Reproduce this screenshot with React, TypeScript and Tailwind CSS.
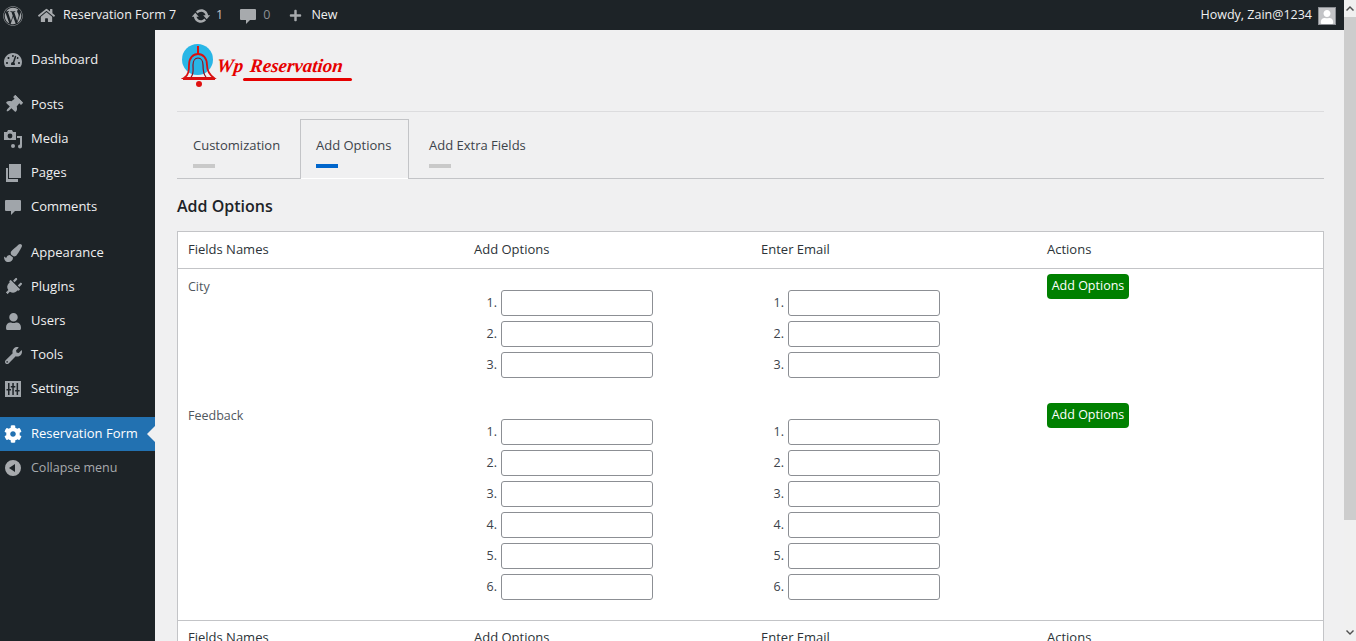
import { FaWordpress, FaHome, FaPlus, FaTachometerAlt, FaThumbtack, FaPlug, FaUser, FaWrench, FaCog, FaPaintBrush } from "react-icons/fa";
import type { ReactNode } from "react";

const font = "font-['Open_Sans','Noto_Sans',sans-serif]";

function UpdateIcon({ className }: { className?: string }) {
  return (
    <svg viewBox="0 0 20 20" className={className} fill="currentColor">
      <path d="M10.200 3.280c3.530 0 6.430 2.610 6.920 6h2.080l-3.500 4-3.500-4h2.320c-.450-1.970-2.210-3.450-4.320-3.450-1.450 0-2.730.710-3.540 1.780L4.950 5.660C6.230 4.200 8.110 3.280 10.200 3.280zm-.400 13.440c-3.520 0-6.430-2.610-6.920-6H.800l3.500-4c1.170 1.330 2.330 2.670 3.500 4H5.480c.450 1.970 2.210 3.440 4.320 3.440 1.450 0 2.730-.700 3.540-1.770l1.710 1.950c-1.280 1.460-3.150 2.380-5.250 2.380z" />
    </svg>
  );
}

function CommentIcon({ className }: { className?: string }) {
  return (
    <svg viewBox="0 0 20 20" className={className} fill="currentColor">
      <path d="M3 3h14a1 1 0 0 1 1 1v9a1 1 0 0 1-1 1h-5l-4 4v-4H3a1 1 0 0 1-1-1V4a1 1 0 0 1 1-1z" />
    </svg>
  );
}

function MediaIcon() {
  return (
    <svg viewBox="0 0 20 20" className="w-5 h-5" fill="currentColor">
      <path d="M1 3h3l1-2h4l1 2h3v8H1z" />
      <circle cx="7" cy="7" r="2.400" fill="#1d2327" />
      <path d="M14 7h5v10.500a2 2 0 1 1-2-2V9h-3zM12 17a2 2 0 1 1-2-2 2 2 0 0 1 2 2z" />
    </svg>
  );
}

function PagesIcon() {
  return (
    <svg viewBox="0 0 20 20" className="w-5 h-5" fill="currentColor">
      <path d="M6 1h12v14H6z" />
      <path d="M3 5h2v11h10v3H3z" />
    </svg>
  );
}

function SettingsIcon() {
  return (
    <svg viewBox="0 0 20 20" className="w-5 h-5">
      <path fill="currentColor" d="M2 2h16v16H2z" />
      <path fill="#1d2327" d="M5 4h1.500v12H5zM3.500 10h4.500v1.500H3.500zM9.300 4h1.500v12H9.300zM7.800 7h4.500v1.500H7.800zM13.600 4h1.500v12h-1.500zM12.100 11h4.500v1.500h-4.500z" />
    </svg>
  );
}

function CollapseIcon() {
  return (
    <svg viewBox="0 0 20 20" className="w-5 h-5" fill="currentColor">
      <path d="M10 2a8 8 0 1 1 0 16 8 8 0 0 1 0-16zm2 4-6 4 6 4z" fillRule="evenodd" />
    </svg>
  );
}

const menuGroups: { label: string; icon: ReactNode; cls: string }[] = [
  { label: "Dashboard", icon: <FaTachometerAlt className="w-[18px] h-[18px]" />, cls: "mt-[13px] mb-[11px]" },
  { label: "Posts", icon: <FaThumbtack className="w-[18px] h-[18px] rotate-45" />, cls: "mt-[11px]" },
  { label: "Media", icon: <MediaIcon />, cls: "" },
  { label: "Pages", icon: <PagesIcon />, cls: "" },
  { label: "Comments", icon: <CommentIcon className="w-5 h-5" />, cls: "" },
  { label: "Appearance", icon: <FaPaintBrush className="w-[18px] h-[18px]" />, cls: "mt-3" },
  { label: "Plugins", icon: <FaPlug className="w-[18px] h-[18px] rotate-45" />, cls: "" },
  { label: "Users", icon: <FaUser className="w-[17px] h-[17px]" />, cls: "" },
  { label: "Tools", icon: <FaWrench className="w-[17px] h-[17px]" />, cls: "" },
  { label: "Settings", icon: <SettingsIcon />, cls: "" },
];

function Sidebar() {
  return (
    <aside className="w-[155px] shrink-0 bg-[#1d2327] text-[13px] text-[#f0f0f1]">
      {menuGroups.map((m) => (
        <div key={m.label} className={`h-[34px] flex items-center ${m.cls}`}>
          <span className="w-[31px] pl-[3px] pr-[8px] flex justify-center text-[#a0a5aa] shrink-0">{m.icon}</span>
          <span>{m.label}</span>
        </div>
      ))}
      <div className="relative h-[34px] mt-[11px] flex items-center bg-[#2271b1] text-white">
        <span className="w-[31px] pl-[3px] pr-[8px] flex justify-center shrink-0">
          <FaCog className="w-[18px] h-[18px]" />
        </span>
        <span>Reservation Form</span>
        <span className="absolute right-0 top-[9px] border-y-[8px] border-r-[8px] border-y-transparent border-r-[#f0f0f1]" />
      </div>
      <div className="h-[34px] flex items-center text-[12.5px] text-[#a7aaad]">
        <span className="w-[31px] pl-[3px] pr-[8px] flex justify-center shrink-0"><CollapseIcon /></span>
        <span>Collapse menu</span>
      </div>
    </aside>
  );
}

function TopBar() {
  return (
    <header className="h-[30px] shrink-0 bg-[#1d2327] text-[12.5px] text-[#f0f0f1] flex items-center pt-px">
      <FaWordpress className="ml-[3px] w-5 h-5 text-[#a7aaad]" />
      <FaHome className="ml-[15px] w-[17px] h-[17px] text-[#a7aaad]" />
      <span className="ml-[8px]">Reservation Form 7</span>
      <UpdateIcon className="ml-[15px] w-5 h-5 text-[#a7aaad]" />
      <span className="ml-[5px] text-[#c3c4c7]">1</span>
      <CommentIcon className="ml-[15px] w-5 h-5 text-[#a7aaad]" />
      <span className="ml-[5px] text-[#8c8f94]">0</span>
      <FaPlus className="ml-[19px] w-[13px] h-[13px] text-[#a7aaad]" />
      <span className="ml-[9px]">New</span>
      <span className="ml-auto">Howdy, Zain@1234</span>
      <span className="ml-[6px] mr-[8px] w-[18px] h-[18px] bg-[#c3c4c7] border border-[#8c8f94] flex items-end justify-center overflow-hidden">
        <FaUser className="w-[14px] h-[14px] text-white" />
      </span>
    </header>
  );
}

function Logo() {
  return (
    <div className="flex items-start h-[50px] pl-[4px] pt-[3px]">
      <svg viewBox="0 0 36 44" className="w-[36px] h-[44px] shrink-0">
        <circle cx="16.500" cy="15.500" r="15.500" fill="#29b6e6" />
        <path d="M17 2v8" stroke="#e01010" strokeWidth="2" />
        <path d="M3 34c5-3 5-8 5-13 0-7 4-11 9-11s9 4 9 11c0 5 3 10 7 13z" fill="none" stroke="#d81010" strokeWidth="1.800" />
        <path d="M10 33c3-3 2-7 2-12 0-4 2-7 5-7s5 3 5 7c0 5 0 9 3 12" fill="none" stroke="#8a1020" strokeWidth="1.200" />
        <path d="M2 34h32v2H2z" fill="#d81010" />
        <circle cx="18" cy="40" r="3" fill="#e01010" />
      </svg>
      <div className="flex flex-col pt-[10px]">
        <div className="font-['Liberation_Serif',serif] italic font-bold text-[19px] leading-[24px] text-[#e60000] whitespace-nowrap -skew-x-6">
          Wp <span className="ml-[2px]">Reservation</span>
        </div>
        <div className="ml-[26px] w-[109px] h-[3px] rounded-full bg-[#e60000]" />
      </div>
    </div>
  );
}

function Tabs() {
  return (
    <div className="flex h-[60px] border-b border-[#c3c4c7] text-[13px] font-medium text-[#3c434a] mt-[7px] whitespace-nowrap">
      <div className="px-4 pt-[16px] w-[123px]">
        <div className="leading-[20px]">Customization</div>
        <div className="mt-[9px] h-1 w-[22px] bg-[#c9c9c9]" />
      </div>
      <div className="px-[15px] pt-[15px] w-[109px] h-[59px] border-x border-t border-[#c3c4c7] relative">
        <div className="leading-[20px]">Add Options</div>
        <div className="mt-[9px] h-1 w-[22px] bg-[#0066cc]" />
        <div className="absolute left-0 right-0 bottom-[-1px] h-px bg-white" />
      </div>
      <div className="px-5 pt-[16px]">
        <div className="leading-[20px]">Add Extra Fields</div>
        <div className="mt-[9px] h-1 w-[22px] bg-[#c9c9c9]" />
      </div>
    </div>
  );
}

function OptionList({ count }: { count: number }) {
  return (
    <ol className="flex flex-col gap-[5px] mt-[21px]">
      {Array.from({ length: count }, (_, i) => (
        <li key={i} className="flex items-center h-[26px]">
          <span className="w-[23px] text-right text-[#3c434a]">{i + 1}.</span>
          <input type="text" className="ml-[4px] w-[152px] h-[26px] bg-white border border-[#8c8f94] rounded-[3px]" />
        </li>
      ))}
    </ol>
  );
}

function HeadRow({ cls }: { cls: string }) {
  return (
    <div className={`grid grid-cols-[286px_287px_286px_1fr] items-center px-[10px] text-[13px] text-[#2c3338] ${cls}`}>
      <span>Fields Names</span>
      <span>Add Options</span>
      <span>Enter Email</span>
      <span>Actions</span>
    </div>
  );
}

function FieldRow({ name, count, cls }: { name: string; count: number; cls: string }) {
  return (
    <div className={`grid grid-cols-[286px_287px_286px_1fr] px-[10px] text-[12.5px] text-[#50575e] ${cls}`}>
      <div className="pt-[8px] leading-[20px]">{name}</div>
      <div><OptionList count={count} /></div>
      <div><OptionList count={count} /></div>
      <div className="pt-[5px]">
        <button className="h-[25px] w-[82px] rounded-[4px] bg-[#008000] text-white text-[12.5px]">Add Options</button>
      </div>
    </div>
  );
}

export default function App() {
  return (
    <div className={`h-[641px] w-[1356px] overflow-hidden flex bg-[#f0f0f1] ${font}`}>
      <div className="w-[1344px] flex flex-col">
        <TopBar />
        <div className="flex flex-1 min-h-0">
          <Sidebar />
          <main className="flex-1 pl-[22px] pr-[20px] pt-[11px] overflow-hidden">
            <Logo />
            <div className="h-px bg-[#dcdcde] mt-[20px]" />
            <Tabs />
            <h2 className="mt-[15px] text-[16px] leading-[24px] font-semibold text-[#1d2327]">Add Options</h2>
            <div className="mt-[13px] bg-white border border-[#c3c4c7]">
              <HeadRow cls="h-[37px] border-b border-[#c3c4c7]" />
              <FieldRow name="City" count={3} cls="h-[129px]" />
              <FieldRow name="Feedback" count={6} cls="h-[223px] border-b border-[#c3c4c7]" />
              <HeadRow cls="h-[33px]" />
            </div>
          </main>
        </div>
      </div>
      <div className="w-3 shrink-0 bg-[#f0f0f0] flex flex-col">
        <div className="h-[17px] flex items-center justify-center text-[#505050]">
          <svg viewBox="0 0 8 5" className="w-2 h-[5px]"><path d="M0 4l4-4 4 4-1 1-3-3-3 3z" fill="currentColor" /></svg>
        </div>
        <div className="h-[503px] bg-[#cdcdcd]" />
        <div className="flex-1 flex items-end justify-center pb-[6px] text-[#505050]">
          <svg viewBox="0 0 8 5" className="w-2 h-[5px]"><path d="M0 1l1-1 3 3 3-3 1 1-4 4z" fill="currentColor" /></svg>
        </div>
      </div>
    </div>
  );
}
